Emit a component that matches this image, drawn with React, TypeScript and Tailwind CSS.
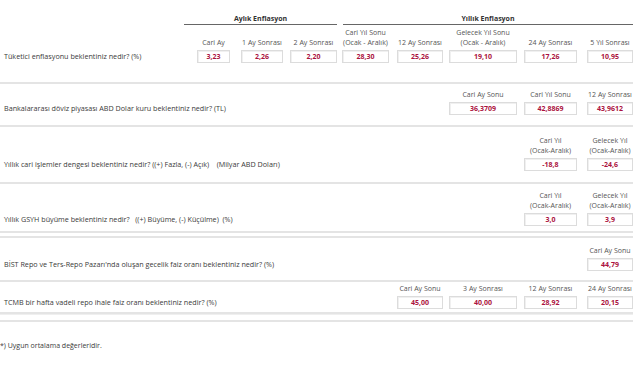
const COLS = [
  { start: "col-start-2", box: "w-[33px]" },
  { start: "col-start-3", box: "w-[42px]" },
  { start: "col-start-4", box: "w-[47px]" },
  { start: "col-start-5", box: "w-[47px]" },
  { start: "col-start-6", box: "w-[46px]" },
  { start: "col-start-7", box: "w-[68px]" },
  { start: "col-start-8", box: "w-[53px]" },
  { start: "col-start-9", box: "w-[46px]" },
];

type Cell = { col: number; head: string[]; value: string };
type Row = { label: string; cells: Cell[]; pad: string };

const ROWS: Row[] = [
  {
    label: "Tüketici enflasyonu beklentiniz nedir? (%)",
    pad: "pt-[3px] pb-[19px]",
    cells: [
      { col: 0, head: ["Cari Ay"], value: "3,23" },
      { col: 1, head: ["1 Ay Sonrası"], value: "2,26" },
      { col: 2, head: ["2 Ay Sonrası"], value: "2,20" },
      { col: 3, head: ["Cari Yıl Sonu", "(Ocak - Aralık)"], value: "28,30" },
      { col: 4, head: ["12 Ay Sonrası"], value: "25,26" },
      { col: 5, head: ["Gelecek Yıl Sonu", "(Ocak - Aralık)"], value: "19,10" },
      { col: 6, head: ["24 Ay Sonrası"], value: "17,26" },
      { col: 7, head: ["5 Yıl Sonrası"], value: "10,95" },
    ],
  },
  {
    label: "Bankalararası döviz piyasası ABD Dolar kuru beklentiniz nedir? (TL)",
    pad: "pt-[6px] pb-[10px]",
    cells: [
      { col: 5, head: ["Cari Ay Sonu"], value: "36,3709" },
      { col: 6, head: ["Cari Yıl Sonu"], value: "42,8869" },
      { col: 7, head: ["12 Ay Sonrası"], value: "43,9612" },
    ],
  },
  {
    label:
      "Yıllık cari işlemler dengesi beklentiniz nedir? ((+) Fazla, (-) Açık)    (Milyar ABD Doları)",
    pad: "pt-[9px] pb-[11px]",
    cells: [
      { col: 6, head: ["Cari Yıl", "(Ocak-Aralık)"], value: "-18,8" },
      { col: 7, head: ["Gelecek Yıl", "(Ocak-Aralık)"], value: "-24,6" },
    ],
  },
  {
    label: "Yıllık GSYH büyüme beklentiniz nedir?   ((+) Büyüme, (-) Küçülme)  (%)",
    pad: "pt-[7px] pb-[5px]",
    cells: [
      { col: 6, head: ["Cari Yıl", "(Ocak-Aralık)"], value: "3,0" },
      { col: 7, head: ["Gelecek Yıl", "(Ocak-Aralık)"], value: "3,9" },
    ],
  },
];

const ROWS2: Row[] = [
  {
    label:
      "BİST Repo ve Ters-Repo Pazarı'nda oluşan gecelik faiz oranı beklentiniz nedir? (%)",
    pad: "pt-[8px] pb-[9px]",
    cells: [{ col: 7, head: ["Cari Ay Sonu"], value: "44,79" }],
  },
  {
    label: "TCMB bir hafta vadeli repo ihale faiz oranı beklentiniz nedir? (%)",
    pad: "pt-[2px] pb-[3px]",
    cells: [
      { col: 4, head: ["Cari Ay Sonu"], value: "45,00" },
      { col: 5, head: ["3 Ay Sonrası"], value: "40,00" },
      { col: 6, head: ["12 Ay Sonrası"], value: "28,92" },
      { col: 7, head: ["24 Ay Sonrası"], value: "20,15" },
    ],
  },
];

function Section({ row, border = true }: { row: Row; border?: boolean }) {
  return (
    <div className={`${row.pad} ${border ? "border-b-2 border-[#e4e4e4]" : ""}`}>
      <div className="grid grid-cols-[197px_44px_49px_52px_55px_52px_75px_63px_46px] gap-y-[2px] items-end">
        {row.cells.map((c) => (
          <div
            key={"h" + c.col}
            className={`${COLS[c.col].start} ${COLS[c.col].box} row-start-1 text-center whitespace-nowrap text-[#555] leading-[10px]`}
          >
            {c.head.map((h) => (
              <div key={h}>{h}</div>
            ))}
          </div>
        ))}
        <div className="col-start-1 row-start-2 self-center pl-[4px] whitespace-pre text-[7.2px] text-[#3a3a3a]">
          {row.label}
        </div>
        {row.cells.map((c) => (
          <div
            key={"v" + c.col}
            className={`${COLS[c.col].start} ${COLS[c.col].box} row-start-2 h-[13px] border border-[#dcdcdc] shadow-[inset_1px_1px_0_#f0f0f0] bg-white flex items-center justify-center font-bold text-[#ab1240] leading-none`}
          >
            {c.value}
          </div>
        ))}
      </div>
    </div>
  );
}

export default function App() {
  return (
    <div
      className="w-[641px] h-[380px] bg-white text-[7px] overflow-hidden"
      style={{ fontFamily: '"Open Sans", "Liberation Sans", sans-serif' }}
    >
      <div className="w-[633px]">
        <div className="flex pt-[14px] pl-[184px] font-bold text-[#333] leading-[10px]">
          <div className="w-[153px] text-center border-b border-[#666]">Aylık Enflasyon</div>
          <div className="ml-[6px] w-[290px] text-center border-b border-[#666]">Yıllık Enflasyon</div>
        </div>
        {ROWS.map((r) => (
          <Section key={r.label} row={r} />
        ))}
        <div className="h-[3px]" />
        <div className="border-t-2 border-[#e4e4e4]">
          <Section row={ROWS2[0]} />
          <Section row={ROWS2[1]} />
          <div className="h-[6px] border-t border-[#efefef]" />
          <div className="border-t-2 border-[#e4e4e4]" />
        </div>
        <div className="mt-[19px] leading-[10px] text-[#3a3a3a]">*) Uygun ortalama değerleridir.</div>
      </div>
    </div>
  );
}
